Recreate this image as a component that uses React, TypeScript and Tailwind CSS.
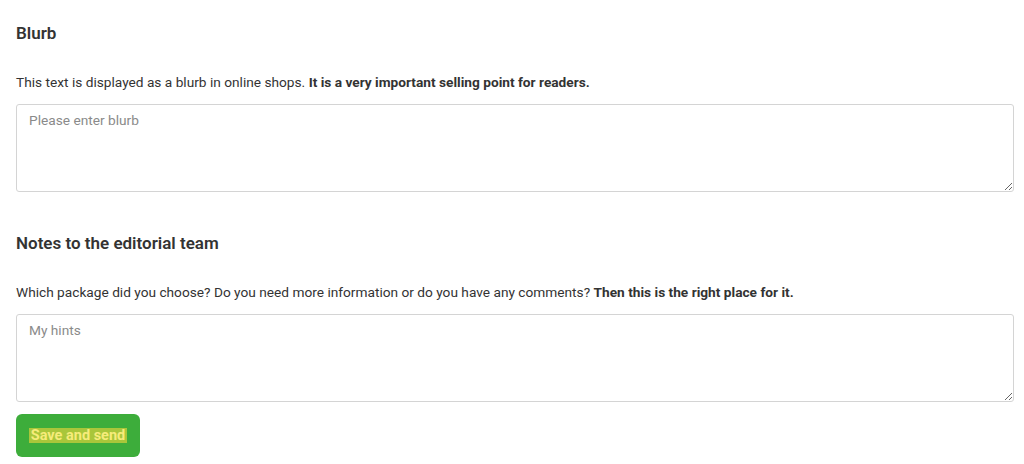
import React from 'react';

const font = { fontFamily: 'Roboto, "Liberation Sans", sans-serif' };

interface SectionProps {
  title: string;
  text: string;
  bold: string;
  placeholder: string;
}

const Section: React.FC<SectionProps> = ({ title, text, bold, placeholder }) => (
  <div>
    <h2 className="text-[17px] leading-[20px] font-semibold text-[#333]">{title}</h2>
    <p className="mt-[31px] text-[13.7px] leading-[16px] text-[#333]">
      {text} <span className="font-bold">{bold}</span>
    </p>
    <textarea
      placeholder={placeholder}
      className="mt-[14px] block w-full h-[88px] border border-[#d4d4d4] rounded-[3px] px-3 py-[7px] text-[13.7px] leading-[16px] text-[#333] placeholder:text-[#8a8a8a] outline-none resize-y"
    />
  </div>
);

export default function App() {
  return (
    <div className="w-[1024px] h-[464px] bg-white pl-4 pr-[10px] pt-[23px] overflow-hidden" style={font}>
      <Section
        title="Blurb"
        text="This text is displayed as a blurb in online shops."
        bold="It is a very important selling point for readers."
        placeholder="Please enter blurb"
      />
      <div className="mt-[41px]">
        <Section
          title="Notes to the editorial team"
          text="Which package did you choose? Do you need more information or do you have any comments?"
          bold="Then this is the right place for it."
          placeholder="My hints"
        />
      </div>
      <button className="mt-[12px] w-[124px] h-[43px] rounded-[6px] bg-[#3dad3b] flex items-center justify-center">
        <span className="bg-[#a9c63a] text-[#f6ec7a] text-[14.5px] leading-[15px] font-bold px-[2px]">
          Save and send
        </span>
      </button>
    </div>
  );
}
